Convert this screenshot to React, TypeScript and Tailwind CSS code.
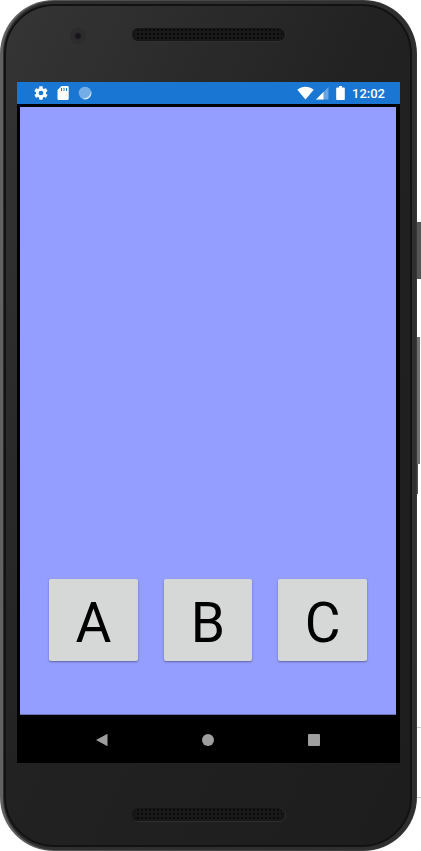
import { useId } from 'react'

const letters = ['A', 'B', 'C']

function Grille() {
  const id = useId()

  return (
    <svg className="h-[14px] w-[154px]" viewBox="0 0 154 14" aria-hidden="true">
      <defs>
        <pattern id={id} width="4" height="4" patternUnits="userSpaceOnUse">
          <rect width="4" height="4" fill="#191919" />
          <rect x="1" y="1" width="2" height="2" fill="#0a0a0a" />
        </pattern>
      </defs>
      <rect x="0.5" y="0.5" width="153" height="13" rx="6.5" fill="#171717" stroke="#303030" />
      <rect x="0" y="0" width="152" height="13" rx="6" fill="#161616" />
      <rect x="3" y="1" width="147" height="11" rx="5" fill={`url(#${id})`} />
    </svg>
  )
}

function StatusBar() {
  return (
    <div className="flex h-[22px] items-center justify-between bg-[#1976d2] pr-[15px] pl-4 text-white">
      <div className="flex items-center gap-2">
        <svg className="size-4" viewBox="0 0 24 24" fill="currentColor" aria-hidden="true">
          <path d="M19.43 12.98c.04-.32.07-.64.07-.98s-.03-.66-.07-.98l2.11-1.65c.19-.15.24-.42.12-.64l-2-3.46c-.12-.22-.39-.3-.61-.22l-2.49 1c-.52-.4-1.08-.73-1.69-.98l-.38-2.65C14.46 2.18 14.25 2 14 2h-4c-.25 0-.46.18-.49.42l-.38 2.65c-.61.25-1.17.59-1.69.98l-2.49-1c-.23-.09-.49 0-.61.22l-2 3.46c-.13.22-.07.49.12.64l2.11 1.65c-.04.32-.07.65-.07.98s.03.66.07.98l-2.11 1.65c-.19.15-.24.42-.12.64l2 3.46c.12.22.39.3.61.22l2.49-1c.52.4 1.08.73 1.69.98l.38 2.65c.03.24.24.42.49.42h4c.25 0 .46-.18.49-.42l.38-2.65c.61-.25 1.17-.59 1.69-.98l2.49 1c.23.09.49 0 .61-.22l2-3.46c.12-.22.07-.49-.12-.64zM12 15.5a3.5 3.5 0 1 1 0-7 3.5 3.5 0 0 1 0 7z" />
        </svg>
        <svg className="h-[14px] w-3" viewBox="0 0 12 14" fill="currentColor" aria-hidden="true">
          <path
            fillRule="evenodd"
            d="M4.5 0H10.5Q11.7 0 11.7 1.2V12.8Q11.7 14 10.5 14H1.7Q.5 14 .5 12.8V4zM4 2v3h1V2zM6.5 2v3h1V2zM9 2v3h1V2z"
          />
        </svg>
        <svg className="ml-px size-[14px]" viewBox="0 0 14 14" aria-hidden="true">
          <circle cx="7" cy="7" r="6.3" fill="#74aee8" />
          <path d="M13 5A6.3 6.3 0 0 1 4.5 12.8Q9 12.6 11 10.2Q12.8 8.4 13 5z" fill="#dcebf9" />
        </svg>
      </div>
      <div className="flex items-center">
        <svg className="h-[14px] w-[17px]" viewBox="0 0 17 14" fill="currentColor" aria-hidden="true">
          <path d="M.3 3.8C5-.3 12-.3 16.7 3.8L8.5 13.6z" />
        </svg>
        <svg className="ml-[2px] h-[14px] w-[13px]" viewBox="0 0 13 14" fill="currentColor" aria-hidden="true">
          <path d="M12.5 1v12.6H0z" opacity="0.35" />
          <path d="M7.5 6v7.6H0z" />
        </svg>
        <svg className="ml-[7px] h-[14px] w-[9px]" viewBox="0 0 9 14" fill="currentColor" aria-hidden="true">
          <path d="M3 0h3v1.4h2q.8 0 .8.8v11q0 .8-.8.8H1q-.8 0-.8-.8v-11q0-.8.8-.8h2z" />
        </svg>
        <span className="ml-[7px] pt-px text-[13px] leading-4 font-medium">12:02</span>
      </div>
    </div>
  )
}

function NavBar() {
  return (
    <nav className="flex h-12 items-center justify-between bg-black pt-px pr-[76px] pl-[75px] text-[#9e9e9e]">
      <button type="button" aria-label="Back" className="flex size-5 items-center justify-center">
        <svg className="size-[14px]" viewBox="0 0 14 14" fill="currentColor" aria-hidden="true">
          <path d="M12.5 .7v12.6L1 7z" />
        </svg>
      </button>
      <button type="button" aria-label="Home" className="flex size-5 items-center justify-center">
        <span className="size-3 rounded-full bg-current" />
      </button>
      <button type="button" aria-label="Overview" className="flex size-5 items-center justify-center">
        <span className="size-3 rounded-[1px] bg-current" />
      </button>
    </nav>
  )
}

function SideKeys() {
  return (
    <div className="flex w-1 flex-col pt-[222px]" aria-hidden="true">
      <div className="h-[57px] w-1 bg-[#555555]" />
      <div className="mt-[58px] h-[127px] w-[3px] bg-[#707070]" />
      <div className="h-[30px] w-px bg-[#505050]" />
      <div className="mt-[233px] h-px w-1 bg-[#c8c8c8]" />
      <div className="mt-[69px] h-px w-1 bg-[#c8c8c8]" />
    </div>
  )
}

function App() {
  return (
    <div className="flex min-h-screen bg-white font-['Roboto',sans-serif]">
      <div className="flex flex-1 rounded-[54px] bg-linear-to-r from-[#626262] via-[#505050] via-20% to-[#383838] pt-px pr-px pb-px pl-[3px]">
        <div className="flex flex-1 rounded-[52px] bg-[#2f2f2f] pt-[3px] pr-1 pb-[3px] pl-px">
          <div className="flex flex-1 flex-col rounded-[50px] border-2 border-[#121212] bg-linear-to-br from-[#353535] via-[#212121] via-50% to-[#1d1d1d] pr-[10px] pl-[11px]">
            <div className="flex h-[76px] items-start pt-[22px]">
              <div className="ml-[53px] flex size-4 items-center justify-center rounded-full bg-[#2c2c2c]">
                <span className="size-2 rounded-full border border-[#302b31] bg-[#17151b]" />
              </div>
              <div className="ml-[46px]">
                <Grille />
              </div>
            </div>
            <div className="flex flex-1 flex-col bg-black">
              <StatusBar />
              <main className="mt-[3px] mr-1 ml-[3px] flex flex-1 flex-col justify-end border-b border-[#6b71ba] bg-[#949eff] px-[29px] pb-[53px]">
                <div className="grid grid-cols-3 gap-[26px]">
                  {letters.map((letter) => (
                    <button
                      key={letter}
                      type="button"
                      className="h-[82px] rounded-xs bg-[#d6d8d7] pt-[6px] text-[55px] leading-none text-black shadow-[0_1px_2px_#00000060]"
                    >
                      {letter}
                    </button>
                  ))}
                </div>
              </main>
              <NavBar />
            </div>
            <div className="flex h-[82px] justify-center pt-[45px]">
              <Grille />
            </div>
          </div>
        </div>
      </div>
      <SideKeys />
    </div>
  )
}

export default App
